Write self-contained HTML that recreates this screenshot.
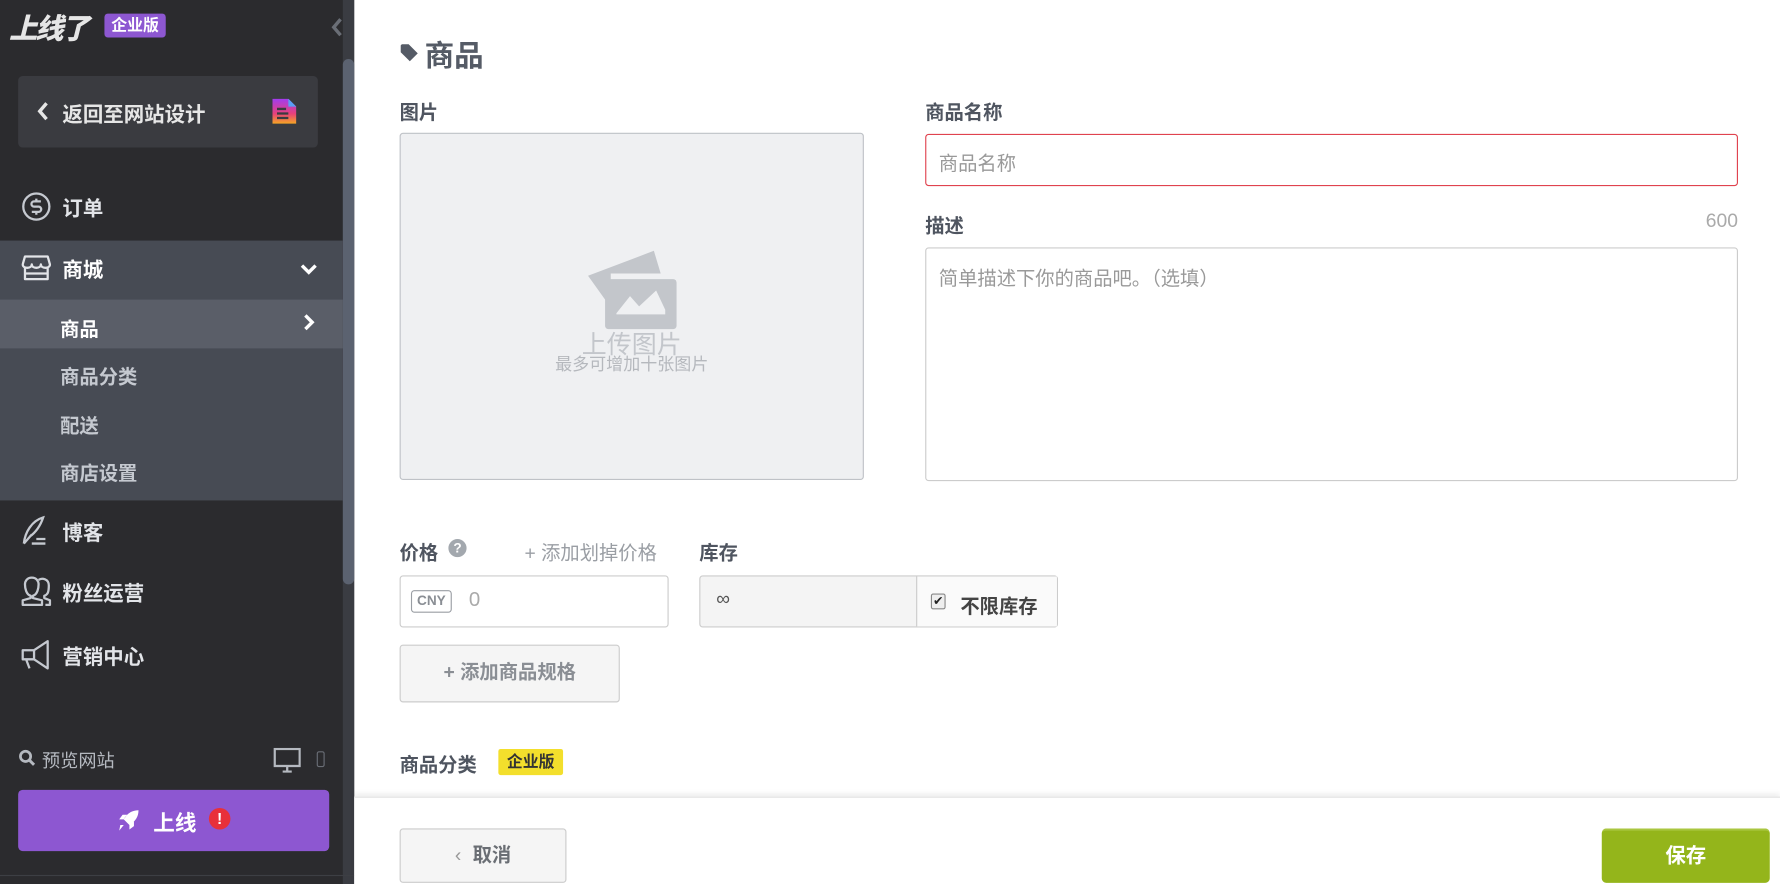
<!DOCTYPE html>
<html><head><meta charset="utf-8"><style>
*{box-sizing:border-box;margin:0;padding:0}
html,body{width:1780px;height:884px;overflow:hidden;background:#fff}
#w{position:absolute;left:0;top:0;width:1568px;height:779px;transform:scale(1.13520,1.1348);transform-origin:0 0;font-family:"Liberation Sans","Noto Sans CJK SC",sans-serif}
.a{position:absolute}
.sb{left:0;top:0;width:312px;height:779px;background:#2b2b2e}
.mi{left:0;width:302px;color:#e2e4e8;font-size:18px;font-weight:bold;display:flex;align-items:center}
.lbl{font-size:17px;font-weight:bold;color:#4f5560}
.sub{left:53px;font-size:17px;font-weight:bold;color:#c5c9d0}
</style></head><body><div id="w">
<div class="a sb"></div>
<div class="a" style="left:302px;top:0;width:10px;height:779px;background:#3a3c42"></div>
<div class="a" style="left:302px;top:52px;width:10px;height:463px;background:#5b6270;border-radius:5px"></div>
<div class="a" style="left:8px;top:6px;font-size:25px;font-weight:900;font-style:italic;color:#e6e6e6;letter-spacing:-2px">上线了</div>
<div class="a" style="left:92px;top:12px;width:54px;height:21px;background:#8d57d1;border-radius:3px;color:#fff;font-size:14px;font-weight:bold;text-align:center;line-height:21px">企业版</div>
<svg class="a" style="left:291px;top:15px" width="12" height="18" viewBox="0 0 12 18"><path d="M9 2L3 9l6 7" stroke="#6a6e76" stroke-width="3" fill="none"/></svg>
<div class="a" style="left:16px;top:67px;width:264px;height:63px;background:#3a3b40;border-radius:4px"></div>
<svg class="a" style="left:32px;top:89px" width="12" height="18" viewBox="0 0 12 18"><path d="M9 2L3 9l6 7" stroke="#e6e6e6" stroke-width="3" fill="none"/></svg>
<div class="a" style="left:55px;top:87px;color:#e6e6e6;font-size:18px;font-weight:bold">返回至网站设计</div>
<svg class="a" style="left:240px;top:87px" width="21" height="22" viewBox="0 0 21 22"><defs><linearGradient id="g" x1="0" y1="0" x2="0" y2="1"><stop offset="0" stop-color="#a13cf0"/><stop offset=".6" stop-color="#e8417a"/><stop offset="1" stop-color="#f5a623"/></linearGradient></defs><path d="M0 0h14l7 7v15H0z" fill="url(#g)"/><path d="M14 0v7h7z" fill="#5aa0f5"/><path d="M4 9h8M4 13h10M4 17h10" stroke="#3a3b40" stroke-width="2"/></svg>
<svg class="a" style="left:19px;top:169px" width="26" height="26" viewBox="0 0 26 26"><circle cx="13" cy="13" r="11.5" stroke="#c5c9d0" stroke-width="2" fill="none"/><path d="M17 8.5h-6a2.3 2.3 0 0 0 0 4.6h4a2.3 2.3 0 0 1 0 4.6H9M13 6v2.5M13 17.7v2.5" stroke="#c5c9d0" stroke-width="2" fill="none"/></svg>
<div class="a mi" style="top:168px;left:55px;height:30px">订单</div>
<div class="a" style="left:0;top:212px;width:302px;height:229px;background:#474b54"></div>
<div class="a" style="left:0;top:264px;width:302px;height:43px;background:#5a5e68"></div>
<svg class="a" style="left:19px;top:224px" width="26" height="24" viewBox="0 0 26 24"><path d="M3 2h20l2 7c0 2-2 3-4 3s-4-1-4-3c0 2-2 3-4 3s-4-1-4-3c0 2-2 3-4 3S1 11 1 9zM3 12v10h20V12M3 17h20" stroke="#e2e4e8" stroke-width="2" fill="none" stroke-linejoin="round"/></svg>
<div class="a" style="left:55px;top:224px;color:#fff;font-size:18px;font-weight:bold">商城</div>
<svg class="a" style="left:264px;top:231px" width="16" height="12" viewBox="0 0 16 12"><path d="M2 3l6 6 6-6" stroke="#fff" stroke-width="3" fill="none"/></svg>
<div class="a sub" style="top:276px;color:#fff">商品</div>
<svg class="a" style="left:266px;top:276px" width="12" height="16" viewBox="0 0 12 16"><path d="M3 2l6 6-6 6" stroke="#fff" stroke-width="3" fill="none"/></svg>
<div class="a sub" style="top:318px">商品分类</div>
<div class="a sub" style="top:361px">配送</div>
<div class="a sub" style="top:403px">商店设置</div>
<svg class="a" style="left:18px;top:454px" width="28" height="28" viewBox="0 0 28 28"><path d="M3 25C4 15 10 5 20 2c-2 6-5 12-12 17M3 25l7-8M10 25h12M14 21h8" stroke="#c5c9d0" stroke-width="2" fill="none"/></svg>
<div class="a mi" style="top:455px;left:55px;height:28px">博客</div>
<svg class="a" style="left:18px;top:507px" width="28" height="28" viewBox="0 0 28 28"><path d="M9 18c-4-1-5-7-5-10s2-6 6-6 6 3 6 6-1 9-5 10v2l8 2v4H2v-4l7-2z M16 4c3-2 9-1 9 5s-1 8-4 9v2l5 2v4h-4" stroke="#c5c9d0" stroke-width="2" fill="none" stroke-linejoin="round"/></svg>
<div class="a mi" style="top:508px;left:55px;height:28px">粉丝运营</div>
<svg class="a" style="left:18px;top:563px" width="28" height="28" viewBox="0 0 28 28"><path d="M2 10h10l12-8v24L12 18H2zM12 10v8M5 18l3 8" stroke="#c5c9d0" stroke-width="2" fill="none" stroke-linejoin="round"/></svg>
<div class="a mi" style="top:564px;left:55px;height:28px">营销中心</div>
<svg class="a" style="left:16px;top:660px" width="16" height="16" viewBox="0 0 16 16"><circle cx="6.5" cy="6.5" r="4.5" stroke="#b5b9c0" stroke-width="2.4" fill="none"/><path d="M10 10l4 4" stroke="#b5b9c0" stroke-width="2.6"/></svg>
<div class="a" style="left:37px;top:657px;color:#b5b9c0;font-size:16px">预览网站</div>
<svg class="a" style="left:241px;top:659px" width="24" height="22" viewBox="0 0 24 22"><rect x="1" y="1" width="22" height="15" stroke="#b5b9c0" stroke-width="2" fill="none"/><path d="M12 16v4M8 21h8" stroke="#b5b9c0" stroke-width="2"/></svg>
<div class="a" style="left:279px;top:662px;width:7px;height:14px;border:1.5px solid #6a6e76;border-radius:2px"></div>
<div class="a" style="left:16px;top:696px;width:274px;height:54px;background:#8d57d1;border-radius:4px"></div>
<svg class="a" style="left:103px;top:713px" width="20" height="20" viewBox="0 0 20 20"><path d="M19 1c-6 0-10 3-13 8l5 5c5-3 8-7 8-13zM6 9H2l3-4h4M11 14v4l4-3v-4M6 14l-4 5 1-5z" fill="#fff"/></svg>
<div class="a" style="left:135px;top:711px;color:#fff;font-size:19px;font-weight:bold">上线</div>
<div class="a" style="left:184px;top:712px;width:19px;height:19px;border-radius:50%;background:#e8303a;color:#fff;font-weight:bold;font-size:14px;text-align:center;line-height:19px">!</div>
<div class="a" style="left:0;top:771px;width:312px;height:1px;background:#3d3f44"></div>

<svg class="a" style="left:352px;top:38px" width="17" height="17" viewBox="0 0 17 17"><path d="M1 2v6l8 8 7-7-8-8H2zM4.5 4.5a1 1 0 1 0 0.1 0" fill="#555b66"/></svg>
<div class="a" style="left:374px;top:29px;font-size:26px;font-weight:bold;color:#555b66">商品</div>
<div class="a lbl" style="left:352px;top:85px">图片</div>
<div class="a" style="left:352px;top:117px;width:409px;height:306px;background:#eff0f2;border:1.5px solid #bfc2c7;border-radius:3px"></div>
<svg class="a" style="left:518px;top:215px" width="80" height="90" viewBox="0 0 80 90"><path d="M0 28l58-22 6 20H20v30z" fill="#c3c6cb"/><rect x="15" y="31" width="63" height="44" rx="3" fill="#c3c6cb"/><path d="M25 61l12-15 8 9 15-14 8 17v4H25z" fill="#eff0f2"/></svg>
<div class="a" style="left:352px;top:286px;width:409px;text-align:center;font-size:22px;color:#c3c6cb">上传图片</div>
<div class="a" style="left:352px;top:310px;width:409px;text-align:center;font-size:15px;color:#b5b8bd">最多可增加十张图片</div>
<div class="a lbl" style="left:815px;top:85px">商品名称</div>
<div class="a" style="left:815px;top:118px;width:716px;height:46px;border:1.5px solid #e0434f;border-radius:3px;padding:11px 11px;font-size:17px;color:#999">商品名称</div>
<div class="a lbl" style="left:815px;top:185px">描述</div>
<div class="a" style="left:1480px;top:185px;width:51px;text-align:right;font-size:17px;color:#aaa">600</div>
<div class="a" style="left:815px;top:218px;width:716px;height:206px;border:1.5px solid #ccc;border-radius:3px;padding:12px 11px;font-size:17px;color:#999">简单描述下你的商品吧。（选填）</div>
<div class="a lbl" style="left:352px;top:473px">价格</div>
<div class="a" style="left:395px;top:475px;width:16px;height:16px;border-radius:50%;background:#a3a8ae;color:#fff;font-size:12px;font-weight:bold;text-align:center;line-height:16px">?</div>
<div class="a" style="left:462px;top:473px;font-size:17px;color:#9a9ea4">+ 添加划掉价格</div>
<div class="a lbl" style="left:616px;top:473px">库存</div>
<div class="a" style="left:352px;top:507px;width:237px;height:46px;border:1.5px solid #ccc;border-radius:3px"></div>
<div class="a" style="left:362px;top:520px;width:36px;height:20px;border:1.5px solid #9a9ea4;border-radius:3px;font-size:12px;font-weight:bold;color:#8a8e94;text-align:center;line-height:17px">CNY</div>
<div class="a" style="left:413px;top:518px;font-size:18px;color:#aaa">0</div>
<div class="a" style="left:616px;top:507px;width:316px;height:46px;border:1.5px solid #ccc;border-radius:3px;background:#f4f4f4"></div>
<div class="a" style="left:807px;top:508px;width:124px;height:44px;background:#fafafa;border-left:1px solid #ccc"></div>
<div class="a" style="left:631px;top:518px;font-size:17px;color:#555">∞</div>
<div class="a" style="left:820px;top:523px;width:13px;height:14px;border:1px solid #888;border-radius:2px;background:#eee;font-size:11px;line-height:12px;text-align:center;color:#222">✔</div>
<div class="a" style="left:846px;top:520px;font-size:17px;font-weight:bold;color:#444">不限库存</div>
<div class="a" style="left:352px;top:568px;width:194px;height:51px;border:1.5px solid #ccc;border-radius:3px;background:#f5f5f5;text-align:center;line-height:48px;font-size:17px;font-weight:bold;color:#8a8e94">+ 添加商品规格</div>
<div class="a lbl" style="left:352px;top:660px">商品分类</div>
<div class="a" style="left:439px;top:660px;width:57px;height:23px;background:#f3df2c;border-radius:2px;font-size:14px;font-weight:bold;color:#333;text-align:center;line-height:23px">企业版</div>
<div class="a" style="left:312px;top:702px;width:1256px;height:77px;background:#fff;border-top:1px solid #e2e2e2;box-shadow:0 -3px 4px rgba(0,0,0,.06)"></div>
<div class="a" style="left:352px;top:730px;width:147px;height:48px;border:1.5px solid #ccc;border-radius:3px;background:#f5f5f5;text-align:center;line-height:45px;font-size:17px;font-weight:bold;color:#6a6e74"><span style="font-weight:normal;color:#999;margin-right:10px">‹</span>取消</div>
<div class="a" style="left:1411px;top:730px;width:148px;height:48px;border-radius:4px;background:#94b51b;border-top:2px solid #a9c640;text-align:center;line-height:45px;font-size:18px;font-weight:bold;color:#fff">保存</div>
</div></body></html>
